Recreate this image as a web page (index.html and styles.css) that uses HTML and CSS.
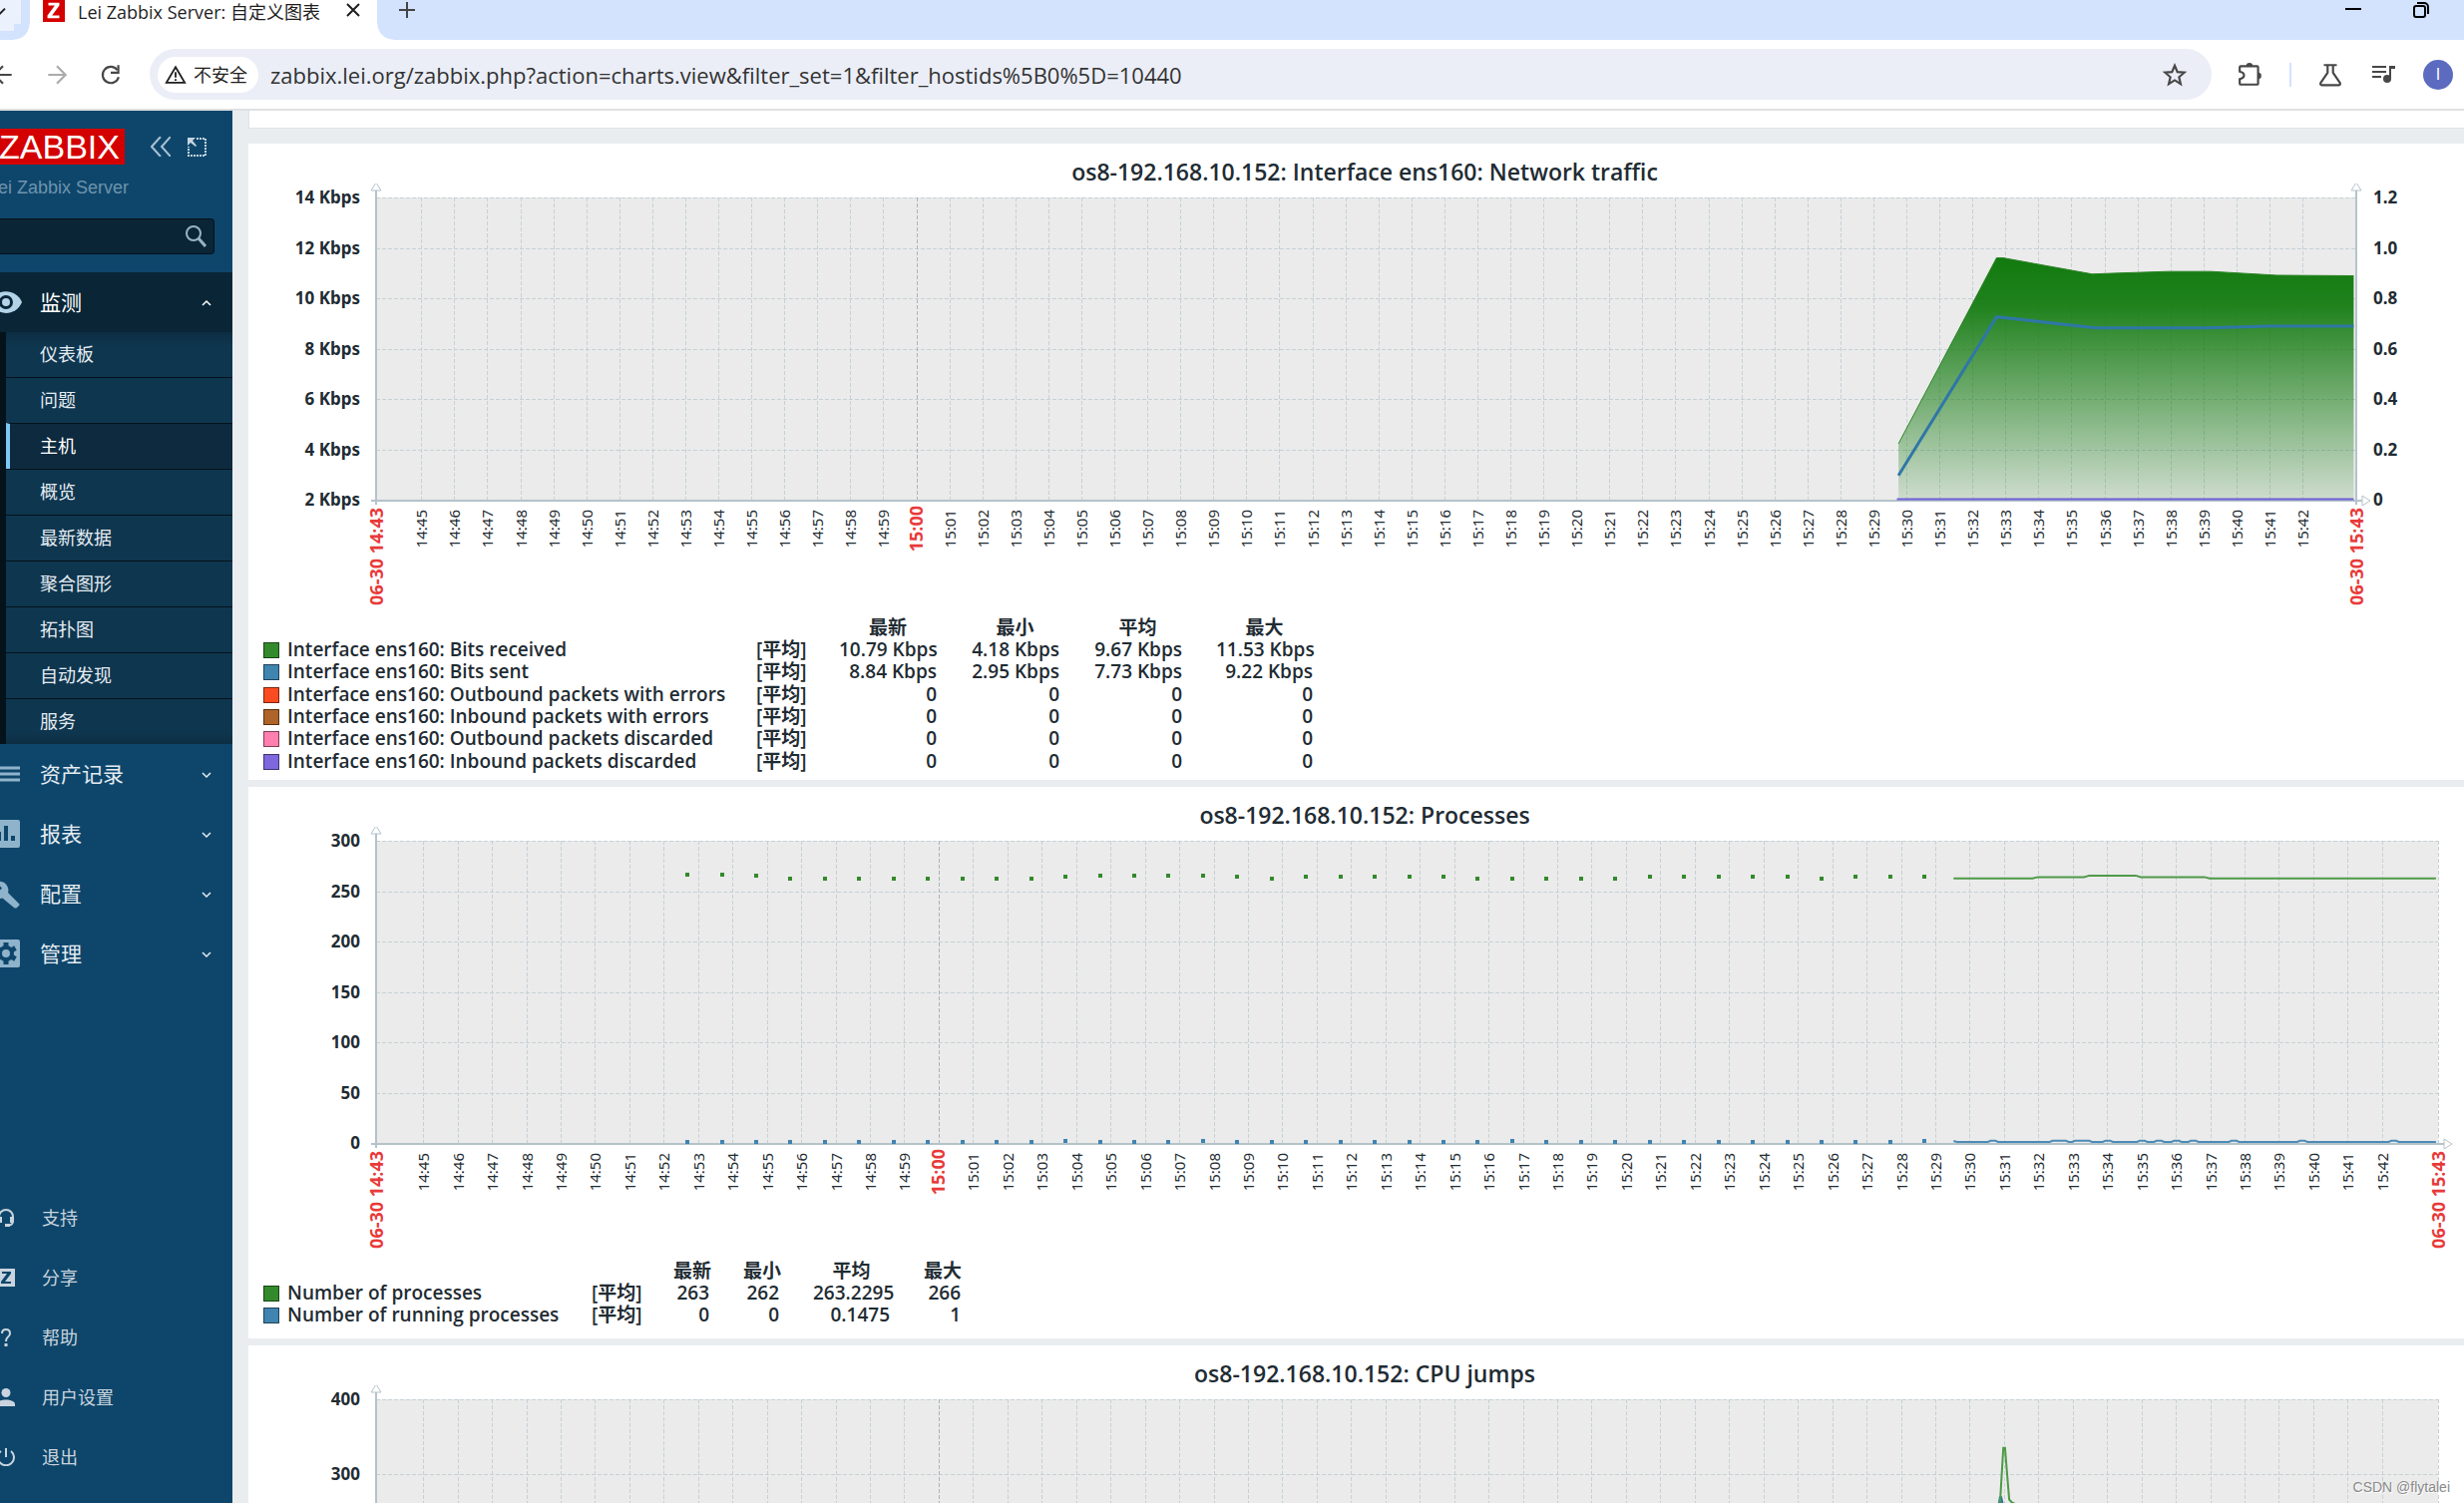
FILE: index.html
```html
<!DOCTYPE html>
<html lang="zh-CN">
<head>
<meta charset="utf-8">
<title>Lei Zabbix Server: 自定义图表</title>
<link rel="stylesheet" href="styles.css">
</head>
<body>
<div class="browser">
  <header class="tabstrip">
    <button class="tab-search" aria-label="搜索标签页"><svg viewBox="0 0 24 24"><path d="M3 7l9 9 9-9" fill="none" stroke="currentColor" stroke-width="3"/></svg></button>
    <div class="tab">
      <svg class="favicon" viewBox="0 0 24 24"><path d="M0 0h24v24H0z" fill="#d40000"/><path d="M6 3h12v3l-8 11h8v3H5v-3l8-11H6z" fill="#fff"/></svg>
      <span class="tab-title">Lei Zabbix Server: 自定义图表</span>
      <button class="icon-btn" aria-label="关闭"><svg class="i-small" viewBox="0 0 16 16"><path d="M2 2l12 12M14 2L2 14" fill="none" stroke="#1f1f1f" stroke-width="2"/></svg></button>
    </div>
    <button class="icon-btn new-tab" aria-label="新标签页"><svg class="i-small" viewBox="0 0 16 16"><path d="M8 0v16M0 8h16" fill="none" stroke="#444" stroke-width="2"/></svg></button>
    <div class="window-controls">
      <button class="icon-btn" aria-label="最小化"><svg class="i-small" viewBox="0 0 16 16"><path d="M0 7h16" stroke="#000" stroke-width="2"/></svg></button>
      <button class="icon-btn" aria-label="还原"><svg class="i-small" viewBox="0 0 16 16"><rect x="1" y="4" width="11" height="11" rx="2" fill="none" stroke="#000" stroke-width="2"/><path d="M4 1h7a4 4 0 0 1 4 4v7" fill="none" stroke="#000" stroke-width="2"/></svg></button>
    </div>
  </header>
  <div class="toolbar">
    <div class="nav-buttons">
      <button class="icon-btn" aria-label="后退"><svg class="i-mid" viewBox="0 0 24 24"><path d="M20 12H5M12 4l-8 8 8 8" fill="none" stroke="#474747" stroke-width="2"/></svg></button>
      <button class="icon-btn" aria-label="前进"><svg class="i-mid" viewBox="0 0 24 24"><path d="M4 12h15M12 4l8 8-8 8" fill="none" stroke="#ababab" stroke-width="2"/></svg></button>
      <button class="icon-btn" aria-label="重新加载"><svg class="i-mid" viewBox="0 0 24 24"><path d="M18 7.500A7.500 7.500 0 1 0 19.300 14" fill="none" stroke="#474747" stroke-width="2"/><path d="M20 3v8h-8V9h6V3z" fill="#474747"/></svg></button>
    </div>
    <div class="omnibox">
      <button class="site-chip"><svg class="i-chip" viewBox="0 0 24 24"><path d="M12 3.500L22 20.500H2z" fill="none" stroke="#1f1f1f" stroke-width="2"/><path d="M12 9v6M12 16.500v2" stroke="#1f1f1f" stroke-width="2"/></svg>不安全</button>
      <input class="url" type="text" aria-label="地址" value="zabbix.lei.org/zabbix.php?action=charts.view&amp;filter_set=1&amp;filter_hostids%5B0%5D=10440">
      <button class="icon-btn" aria-label="收藏"><svg class="i-mid" viewBox="0 0 24 24"><path d="M12 3.500l2.500 5.900 6.400.5-4.900 4.200 1.500 6.300L12 17l-5.500 3.400L8 14.100 3.100 9.900l6.400-.5z" fill="none" stroke="#474747" stroke-width="2"/></svg></button>
    </div>
    <div class="actions">
      <button class="icon-btn" aria-label="扩展程序"><svg class="i-mid" viewBox="0 0 24 24"><path d="M3 4h15q1 0 1 1v15q0 1-1 1H3q-1 0-1-1v-4q4-1 4-3.500T2 9V5q0-1 1-1z" fill="none" stroke="#474747" stroke-width="2"/><path d="M8 4a3 3 0 0 1 6 0zM19 10a3 3 0 0 1 0 6z" fill="#474747"/></svg></button>
      <span class="divider"></span>
      <button class="icon-btn" aria-label="实验室"><svg class="i-mid" viewBox="0 0 24 24"><path d="M6 3h12M9.500 3v7L3 19.500q-.5 2 1 2h16q1.500 0 1-2L14.500 10V3" fill="none" stroke="#474747" stroke-width="2"/></svg></button>
      <button class="icon-btn" aria-label="媒体"><svg class="i-large" viewBox="0 0 28 28"><path d="M3 6h14M3 11h14M3 16h9" stroke="#474747" stroke-width="2"/><path d="M20 17V5h6v3h-4v10" fill="#474747"/><circle cx="18" cy="18" r="4" fill="#474747"/></svg></button>
      <button class="avatar" aria-label="个人资料">I</button>
    </div>
  </div>

  <div class="page">
    <aside class="sidebar">
      <div class="brand">
        <a class="logo" href="#">ZABBIX</a>
        <button class="icon-btn" aria-label="收起边栏"><svg class="i-side" viewBox="0 0 20 20"><path d="M10 0L1 10l9 10M20 0l-9 10 9 10" fill="none" stroke="#a9c1d3" stroke-width="2"/></svg></button>
        <button class="icon-btn" aria-label="全屏"><svg class="i-side" viewBox="0 0 20 20"><path d="M10 2h9v17H2v-9" fill="none" stroke="#c5d5e1" stroke-width="2" stroke-dasharray="2 1"/><path d="M1 1h8L6 4l4 5-1 1-5-4-3 3z" fill="#c5d5e1"/></svg></button>
      </div>
      <div class="server-name">Lei Zabbix Server</div>
      <form class="search">
        <input type="search" aria-label="搜索">
        <button class="icon-btn" type="button" aria-label="搜索"><svg class="i-search" viewBox="0 0 22 22"><circle cx="9" cy="8" r="7" fill="none" stroke="#9ab3c3" stroke-width="2"/><path d="M14 13l7 8" stroke="#9ab3c3" stroke-width="3"/></svg></button>
      </form>
      <nav class="menu">
        <a class="menu-item open" href="#"><svg class="i-menu" viewBox="0 0 36 36"><path d="M2 18C8 3.500 28 3.500 34 18 28 32.500 8 32.500 2 18z" fill="#b3d3e9"/><circle cx="18" cy="18" r="7" fill="#0a2636"/><circle cx="18" cy="18" r="4" fill="#b3d3e9"/></svg><span>监测</span><svg class="chev" viewBox="0 0 10 10"><path d="M1 8l4-4 4 4" fill="none" stroke="currentColor" stroke-width="1.500"/></svg></a>
        <div class="submenu">
          <a href="#">仪表板</a>
          <a href="#">问题</a>
          <a class="active" href="#">主机</a>
          <a href="#">概览</a>
          <a href="#">最新数据</a>
          <a href="#">聚合图形</a>
          <a href="#">拓扑图</a>
          <a href="#">自动发现</a>
          <a href="#">服务</a>
        </div>
        <a class="menu-item" href="#"><svg class="i-menu" viewBox="0 0 36 36"><path d="M4 12h28M4 18h28M4 24h28" stroke="#8fb3cb" stroke-width="3"/></svg><span>资产记录</span><svg class="chev" viewBox="0 0 10 10"><path d="M1 4l4 4 4-4" fill="none" stroke="currentColor" stroke-width="1.500"/></svg></a>
        <a class="menu-item" href="#"><svg class="i-menu" viewBox="0 0 36 36"><rect x="4" y="4" width="28" height="28" rx="2" fill="#8fb3cb"/><path d="M11 16v9M18 10v15M25 20v5" stroke="#0e466b" stroke-width="4"/></svg><span>报表</span><svg class="chev" viewBox="0 0 10 10"><path d="M1 4l4 4 4-4" fill="none" stroke="currentColor" stroke-width="1.500"/></svg></a>
        <a class="menu-item" href="#"><svg class="i-menu" viewBox="0 0 36 36"><path d="M31 28L20 17c1-3 0-6-2-8.500-3-3-6.500-3.500-10-2l6 6-4 4-6-6c-1.500 3.500-1 7 2 10 2.500 2 5.500 3 8.500 2L26 32q1.500 1 3 0l2-2q1-1 0-2z" fill="#8fb3cb"/></svg><span>配置</span><svg class="chev" viewBox="0 0 10 10"><path d="M1 4l4 4 4-4" fill="none" stroke="currentColor" stroke-width="1.500"/></svg></a>
        <a class="menu-item" href="#"><svg class="i-menu" viewBox="0 0 36 36"><rect x="4" y="4" width="28" height="28" rx="2" fill="#8fb3cb"/><circle cx="18" cy="18" r="8" fill="#0e466b"/><path d="M18 7v22M8.500 12.500l19 11M8.500 23.500l19-11" stroke="#0e466b" stroke-width="5"/><circle cx="18" cy="18" r="4" fill="#8fb3cb"/></svg><span>管理</span><svg class="chev" viewBox="0 0 10 10"><path d="M1 4l4 4 4-4" fill="none" stroke="currentColor" stroke-width="1.500"/></svg></a>
      </nav>
      <nav class="user-menu">
        <a href="#"><svg viewBox="0 0 18 18"><path d="M2 10V8a7 7 0 0 1 14 0v4q0 4-4 4.500" fill="none" stroke="currentColor" stroke-width="2"/><path d="M1 8h4v6H3q-2 0-2-2zM17 8h-4v6h2q2 0 2-2zM8 15h5v3H8z" fill="currentColor"/></svg><span>支持</span></a>
        <a href="#"><svg viewBox="0 0 18 18"><path d="M0 0h18v18H0z" fill="currentColor"/><path d="M5 3h9v2l-6 8h6v2H4v-2l6-8H5z" fill="#0e466b"/></svg><span>分享</span></a>
        <a href="#"><svg viewBox="0 0 18 18"><path d="M5 5q0-4 4-4t4 4q0 2-2 3.500T9 13" fill="none" stroke="currentColor" stroke-width="2"/><path d="M7.500 15h3v3h-3z" fill="currentColor"/></svg><span>帮助</span></a>
        <a href="#"><svg viewBox="0 0 18 18"><circle cx="9" cy="4.500" r="4.500" fill="currentColor"/><path d="M0 18v-2c0-6 18-6 18 0v2z" fill="currentColor"/></svg><span>用户设置</span></a>
        <a href="#"><svg viewBox="0 0 18 18"><path d="M9 0v9M4 3a8 8 0 1 0 10 0" fill="none" stroke="currentColor" stroke-width="2"/></svg><span>退出</span></a>
      </nav>
    </aside>

    <main class="content">
      <div class="filter-bar"></div>
      <section class="graph">
        <h2>os8-192.168.10.152: Interface ens160: Network traffic</h2>
        <div class="plot" data-graph="traffic"></div>
        <table class="legend legend-traffic">
          <colgroup><col class="c-name"><col class="c-func"><col class="c-val"><col class="c-val2"><col class="c-val2"><col class="c-last"></colgroup>
          <thead><tr><td></td><td></td><th>最新</th><th>最小</th><th>平均</th><th>最大</th></tr></thead>
          <tbody>
            <tr><td><i class="sw green"></i>Interface ens160: Bits received</td><td>[平均]</td><td>10.79 Kbps</td><td>4.18 Kbps</td><td>9.67 Kbps</td><td>11.53 Kbps</td></tr>
            <tr><td><i class="sw blue"></i>Interface ens160: Bits sent</td><td>[平均]</td><td>8.84 Kbps</td><td>2.95 Kbps</td><td>7.73 Kbps</td><td>9.22 Kbps</td></tr>
            <tr><td><i class="sw red"></i>Interface ens160: Outbound packets with errors</td><td>[平均]</td><td>0</td><td>0</td><td>0</td><td>0</td></tr>
            <tr><td><i class="sw brown"></i>Interface ens160: Inbound packets with errors</td><td>[平均]</td><td>0</td><td>0</td><td>0</td><td>0</td></tr>
            <tr><td><i class="sw pink"></i>Interface ens160: Outbound packets discarded</td><td>[平均]</td><td>0</td><td>0</td><td>0</td><td>0</td></tr>
            <tr><td><i class="sw violet"></i>Interface ens160: Inbound packets discarded</td><td>[平均]</td><td>0</td><td>0</td><td>0</td><td>0</td></tr>
          </tbody>
        </table>
      </section>
      <section class="graph">
        <h2>os8-192.168.10.152: Processes</h2>
        <div class="plot" data-graph="processes"></div>
        <table class="legend legend-proc">
          <colgroup><col class="c-name"><col class="c-func"><col class="c-val"><col class="c-val"><col class="c-avg"><col class="c-last"></colgroup>
          <thead><tr><td></td><td></td><th>最新</th><th>最小</th><th>平均</th><th>最大</th></tr></thead>
          <tbody>
            <tr><td><i class="sw green"></i>Number of processes</td><td>[平均]</td><td>263</td><td>262</td><td>263.2295</td><td>266</td></tr>
            <tr><td><i class="sw blue"></i>Number of running processes</td><td>[平均]</td><td>0</td><td>0</td><td>0.1475</td><td>1</td></tr>
          </tbody>
        </table>
      </section>
      <section class="graph">
        <h2>os8-192.168.10.152: CPU jumps</h2>
        <div class="plot" data-graph="cpu"></div>
      </section>
    </main>
  </div>
  <div class="watermark">CSDN @flytalei</div>
</div>
<script src="charts.js"></script>
</body>
</html>
```
FILE: styles.css
```css
* { box-sizing: border-box; }
body { margin: 0; font-family: "Noto Sans", "Noto Sans CJK SC", sans-serif; color: #1f2c33; }
a { color: inherit; text-decoration: none; }
button { font: inherit; color: inherit; border: 0; padding: 0; background: none; }
svg { display: block; flex: none; }
.browser { height: 100vh; display: flex; flex-direction: column; overflow: hidden; }
.icon-btn { display: flex; align-items: center; justify-content: center; }
.i-small { width: 16px; height: 16px; }
.i-mid { width: 26px; height: 26px; }
.i-large { width: 28px; height: 28px; }
.i-chip, .i-search { width: 22px; height: 22px; }
.i-side { width: 20px; height: 20px; }

/* Tab strip */
.tabstrip { flex: none; height: 40px; display: flex; background: #d3e2fd; }
.tab-search { width: 21px; height: 31px; background: #ebf2fe; border-radius: 0 0 8px 0; color: #1f1f1f; }
.tab-search svg { width: 16px; height: 16px; margin: 0 0 8px -9px; }
.tab { position: relative; width: 348px; margin-left: 9px; background: #fff; display: flex; align-items: flex-start; padding: 0 16px 0 12px; }
.tab::before, .tab::after { content: ""; position: absolute; bottom: 0; width: 16px; height: 16px; }
.tab::before { left: -16px; background: radial-gradient(circle at 0 0, #d3e2fd 15px, #fff 16px); }
.tab::after { right: -16px; background: radial-gradient(circle at 100% 0, #d3e2fd 15px, #fff 16px); }
.favicon { width: 24px; height: 22px; }
.tab-title { flex: 1; margin-left: 12px; font-family: "Open Sans", "Noto Sans CJK SC", sans-serif; font-size: 18px; line-height: 24px; white-space: nowrap; color: #1f1f1f; }
.tab .icon-btn, .new-tab { height: 20px; }
.new-tab { margin-left: 22px; }
.window-controls { margin-left: auto; display: flex; gap: 52px; height: 20px; padding-right: 35px; }

/* Address bar */
.toolbar { flex: none; height: 71px; display: flex; align-items: center; gap: 26px; padding-right: 11px; background: #fff; border-bottom: 2px solid #dfe0e1; }
.nav-buttons { display: flex; gap: 28px; margin-left: -10px; }
.omnibox { flex: 1; height: 51px; display: flex; align-items: center; gap: 12px; padding: 0 24px 0 8px; border-radius: 26px; background: #ebeef7; }
.site-chip { display: flex; align-items: center; gap: 7px; height: 36px; padding: 0 11px 0 7px; border-radius: 18px; background: #fff; color: #1f1f1f; font-size: 18px; line-height: 24px; white-space: nowrap; }
.url { flex: 1; border: 0; padding: 0; background: none; color: #333; font: 22px/28px "Open Sans", sans-serif; outline: 0; }
.actions { display: flex; align-items: center; gap: 26px; }
.divider { width: 2px; height: 24px; background: #d3e2fd; }
.avatar { width: 30px; height: 30px; border-radius: 50%; background: #5c6bc0; color: #fff; font: 16px/30px "Liberation Sans", sans-serif; }

/* Sidebar */
.page { flex: 1; min-height: 0; display: flex; }
.sidebar { flex: none; width: 233px; display: flex; flex-direction: column; background: #0e466b; color: #e4ecf2; }
.brand { display: flex; align-items: center; gap: 16px; padding-top: 18px; }
.logo { display: flex; justify-content: flex-end; width: 125px; height: 36px; padding-right: 5px; margin-right: 10px; background: #d40000; color: #fff; font: 34px/36px "Liberation Sans", sans-serif; }
.server-name { display: flex; justify-content: flex-end; width: 129px; margin-top: 12px; font: 18px/22px "Liberation Sans", sans-serif; color: #6f93ad; white-space: nowrap; }
.search { display: flex; margin: 20px 18px 18px 0; height: 36px; padding-right: 7px; background: #0a2636; border: 1px solid #04121b; border-left: 0; border-radius: 0 4px 4px 0; }
.search input { flex: 1; min-width: 0; background: none; border: 0; outline: 0; color: #fff; }
.menu-item { display: flex; align-items: center; height: 60px; padding-right: 21px; font-size: 21px; line-height: 30px; }
.menu-item.open { background: #0a2636; color: #fff; }
.i-menu { width: 36px; height: 36px; margin: 0 16px 0 -12px; }
.menu-item span { flex: 1; }
.chev { width: 10px; height: 10px; }
.submenu { background: linear-gradient(#0c2d42, #0f364f 14px, #0f364f 401px, #0c2d42); border-left: 6px solid #04121b; }
.submenu a { display: block; padding-left: 34px; font-size: 18px; line-height: 45px; }
.submenu a + a { border-top: 1px solid #04121b; }
.submenu .active { padding-left: 30px; background: #0e2a3e; border-left: 4px solid #7cc7f5; color: #fff; }
.user-menu { margin-top: auto; padding-bottom: 16px; color: #c9d4de; }
.user-menu a { display: flex; align-items: center; gap: 27px; height: 60px; margin-left: -3px; font-size: 18px; line-height: 26px; }
.user-menu svg { width: 18px; height: 18px; }

/* Graphs */
.content { flex: 1; min-width: 0; padding-left: 16px; background: #e9edf0; overflow: hidden; }
.filter-bar { height: 18px; margin-bottom: 15px; background: #fff; border: solid #dfe4e7; border-width: 0 0 1px 1px; }
.graph { background: #fff; margin-bottom: 7px; overflow: hidden; }
.graph h2 { margin: 0; padding: 8px 0 0 17px; font: 600 23px/40px "Open Sans", sans-serif; height: 40px; text-align: center; }
.plot { height: 434px; }
.plot svg { width: 100%; height: 100%; }
.legend { border-collapse: collapse; table-layout: fixed; margin-left: 15px; font-size: 19px; font-weight: 600; line-height: 22px; white-space: nowrap; font-family: "Open Sans", "Noto Sans CJK SC", sans-serif; }
.legend td, .legend th { padding: 0; text-align: right; font-weight: 600; }
.legend th { text-align: center; }
.legend td:nth-child(-n+2) { text-align: left; }
.legend td:nth-child(n+3), .legend th { padding-right: 34px; }
.legend tr > :last-child { padding-right: 0; }
.legend-traffic { width: 1052px; height: 156px; margin-bottom: 8px; }
.legend-traffic .c-name { width: 494px; }
.legend-traffic .c-func { width: 83px; }
.legend-traffic .c-val { width: 132px; }
.legend-traffic .c-val2 { width: 123px; }
.legend-traffic .c-last { width: 97px; }
.legend-proc { width: 699px; height: 66px; margin-bottom: 13px; }
.legend-proc .c-name { width: 329px; }
.legend-proc .c-func { width: 82px; }
.legend-proc .c-val { width: 70px; }
.legend-proc .c-avg { width: 111px; }
.legend-proc .c-last { width: 37px; }
.sw { display: inline-block; width: 16px; height: 16px; margin-right: 8px; vertical-align: -2px; border: 1px solid rgba(0, 0, 0, .5); }
.green { background: #338a2c; }
.blue { background: #4084b0; }
.red { background: #fb4b21; }
.brown { background: #ae6429; }
.pink { background: #ff7fae; }
.violet { background: #7f68dd; }

.plot-bg { fill: #ebebeb; }
.grid { stroke: #c6d1d6; stroke-width: 1px; stroke-dasharray: 4 2; fill: none; }
.grid-main { stroke: #a9b5ba; }
.axis { stroke: #b4c3ca; stroke-width: 2px; fill: none; }
.arrow { stroke: #b4c3ca; stroke-width: 1px; fill: #fff; }
.y-label { font: bold 17px "Noto Sans", sans-serif; fill: #1f2c33; }
.x-label { font: 15px "Noto Sans", sans-serif; fill: #1f2c33; }
.x-main { font: bold 18px "Noto Sans", sans-serif; fill: #e83a3a; }
.watermark { position: absolute; right: 14px; bottom: 7px; font: 14px/18px "Liberation Sans", sans-serif; color: #8a8a8a; text-shadow: 1px 1px 0 #fff; }
```
FILE: charts.js
```javascript
const NS = 'http://www.w3.org/2000/svg';
const LEFT = 128;
const TOP = 14;
// Minutes between the start of the period and the first labelled tick.
const FIRST_TICK = 1.37;

const repeat = (value, times) => Array(times).fill(value);
const total = [266.8, 266.8, 265.3, ...repeat(262.5, 8), 264, ...repeat(265.3, 4), 264, 262.5,
  ...repeat(264, 5), ...repeat(262.5, 5), ...repeat(264, 5), 262.5, ...repeat(264, 3)];
const running = total.map((_, i) => [11, 15, 24, 36].includes(i) ? 2 : 1);
const bumps = [[47.05, 47.05], [48.85, 49.1], [49.5, 49.78], [50.39, 50.39], [51.39, 51.39], [51.88, 51.88],
  [52.39, 52.39], [52.88, 52.88], [54.06, 54.06], [56.05, 56.05], [58.71, 58.71]];
const runningLine = [[45.9, 2], [46, 1]];
bumps.forEach(([a, b]) => runningLine.push([a - .15, 1], [a - .07, 2.2], [b + .07, 2.2], [b + .15, 1]));
runningLine.push([59.94, 1]);

const graphs = {
  traffic: {
    right: 108, height: 303, min: 2, max: 14, times: true,
    labels: [2, 4, 6, 8, 10, 12, 14].map(v => [v, v + ' Kbps']),
    rightLabels: ['0', '0.2', '0.4', '0.6', '0.8', '1.0', '1.2'],
    area: [[46.13, 4.22], [49.1, 11.6], [49.3, 11.6], [52, 10.96], [52.8, 11], [54.3, 11.06], [55.6, 11.06], [57.6, 10.91], [59.92, 10.89]],
    lines: [
      { color: '#2f77a6', width: 3, points: [[46.13, 2.96], [49.1, 9.26], [52.1, 8.82], [55.5, 8.82], [57.4, 8.89], [59.92, 8.89]] },
      { color: '#6f5fd8', width: 2, points: [[46.08, 2.02], [59.92, 2.02]] }
    ]
  },
  processes: {
    right: 26, height: 303, min: 0, max: 300, times: true,
    labels: [0, 50, 100, 150, 200, 250, 300].map(v => [v, String(v)]),
    lines: [
      { color: '#4f9a49', width: 2, points: [[45.9, 262.6], [48.2, 262.6], [48.35, 264], [49.7, 264], [49.85, 265.4], [51.2, 265.4], [51.35, 264], [53.2, 264], [53.35, 262.6], [59.94, 262.6]] },
      { color: '#4c8cb6', width: 2, points: runningLine }
    ],
    dots: [{ color: '#338a2c', values: total }, { color: '#3f83b0', values: running }]
  },
  cpu: {
    right: 26, height: 300, min: 0, max: 400,
    labels: [[400, '400'], [300, '300']],
    lines: [
      { color: '#2f77a6', width: 3, points: [[47.2, 250], [47.27, 270], [47.36, 250]] },
      { color: '#4c9a46', width: 2, points: [[47.24, 250], [47.35, 335], [47.4, 335], [47.52, 266], [47.6, 262], [48.2, 250]] }
    ]
  }
};

function add(parent, name, attrs, text) {
  const node = document.createElementNS(NS, name);
  for (const key in attrs) node.setAttribute(key, attrs[key]);
  if (text) node.textContent = text;
  parent.appendChild(node);
  return node;
}

function draw(host) {
  const g = graphs[host.dataset.graph];
  host.replaceChildren();
  const svg = add(host, 'svg', {});
  const right = host.clientWidth - g.right;
  const bottom = TOP + g.height;
  const px = m => LEFT + m * (right - LEFT) / 60;
  const py = v => bottom - (v - g.min) * g.height / (g.max - g.min);
  const path = points => points.map(([m, v]) => px(m).toFixed(1) + ',' + py(v).toFixed(1)).join(' ');

  add(svg, 'rect', { class: 'plot-bg', x: LEFT, y: TOP, width: right - LEFT, height: g.height });
  g.labels.forEach(([v, label]) => {
    const y = Math.round(py(v));
    add(svg, 'path', { class: 'grid', d: `M${LEFT} ${y + .5}H${right}` });
    add(svg, 'text', { class: 'y-label', x: LEFT - 16, y: y + 6, 'text-anchor': 'end' }, label);
  });
  for (let i = 0; i < 58; i++) {
    const x = Math.round(px(FIRST_TICK + i));
    const main = i === 15;
    add(svg, 'path', { class: main ? 'grid grid-main' : 'grid', d: `M${x + .5} ${TOP}V${bottom}` });
    if (g.times) {
      const minute = 45 + i;
      const label = (minute < 60 ? '14:' : '15:') + String(minute % 60).padStart(2, '0');
      tick(svg, x - 1, bottom + (main ? 6 : 10), label, main);
    }
  }
  add(svg, 'path', { class: 'grid', d: `M${right + .5} ${TOP}V${bottom}` });

  if (g.area) {
    const grad = add(add(svg, 'defs', {}), 'linearGradient', { id: 'fade', x1: 0, y1: 0, x2: 0, y2: 1 });
    add(grad, 'stop', { offset: 0, 'stop-color': '#117a0e', 'stop-opacity': 1 });
    add(grad, 'stop', { offset: .2, 'stop-color': '#117a0e', 'stop-opacity': .93 });
    add(grad, 'stop', { offset: 1, 'stop-color': '#117a0e', 'stop-opacity': .13 });
    const last = g.area[g.area.length - 1][0];
    add(svg, 'polygon', { fill: 'url(#fade)', points: path([...g.area, [last, g.min], [g.area[0][0], g.min]]) });
    add(svg, 'polyline', { fill: 'none', stroke: '#2c8426', points: path(g.area) });
  }

  add(svg, 'path', { class: 'axis', d: `M${LEFT} ${TOP - 7}V${bottom + 5}M${LEFT - 5} ${bottom + 1}H${right + 7}` });
  add(svg, 'path', { class: 'arrow', d: `M${LEFT - 5} ${TOP - 7}h10l-5-8z` });
  add(svg, 'path', { class: 'arrow', d: `M${right + 6} ${bottom - 4}v10l8-5z` });
  if (g.rightLabels) {
    add(svg, 'path', { class: 'axis', d: `M${right} ${TOP - 7}V${bottom + 5}` });
    add(svg, 'path', { class: 'arrow', d: `M${right - 5} ${TOP - 7}h10l-5-8z` });
    g.rightLabels.forEach((label, i) => {
      const y = Math.round(bottom - i * g.height / (g.rightLabels.length - 1));
      add(svg, 'text', { class: 'y-label', x: right + 17, y: y + 6 }, label);
    });
  }
  g.lines.forEach(line => add(svg, 'polyline', { fill: 'none', stroke: line.color, 'stroke-width': line.width, points: path(line.points) }));
  (g.dots || []).forEach(set => set.values.forEach((v, i) =>
    add(svg, 'rect', { fill: set.color, x: Math.round(px(9.06 + i)) - 2, y: Math.round(py(v)) - 2, width: 4, height: 4 })));
  if (g.times) {
    tick(svg, LEFT, bottom + 8, '06-30 14:43', true);
    tick(svg, right, bottom + 8, '06-30 15:43', true);
  }
}

function tick(svg, x, y, label, main) {
  add(svg, 'text', { class: main ? 'x-main' : 'x-label', 'text-anchor': 'end', transform: `translate(${x + 7} ${y}) rotate(-90)` }, label);
}

const hosts = document.querySelectorAll('.plot');
const drawAll = () => hosts.forEach(draw);
drawAll();
window.addEventListener('resize', drawAll);
```
